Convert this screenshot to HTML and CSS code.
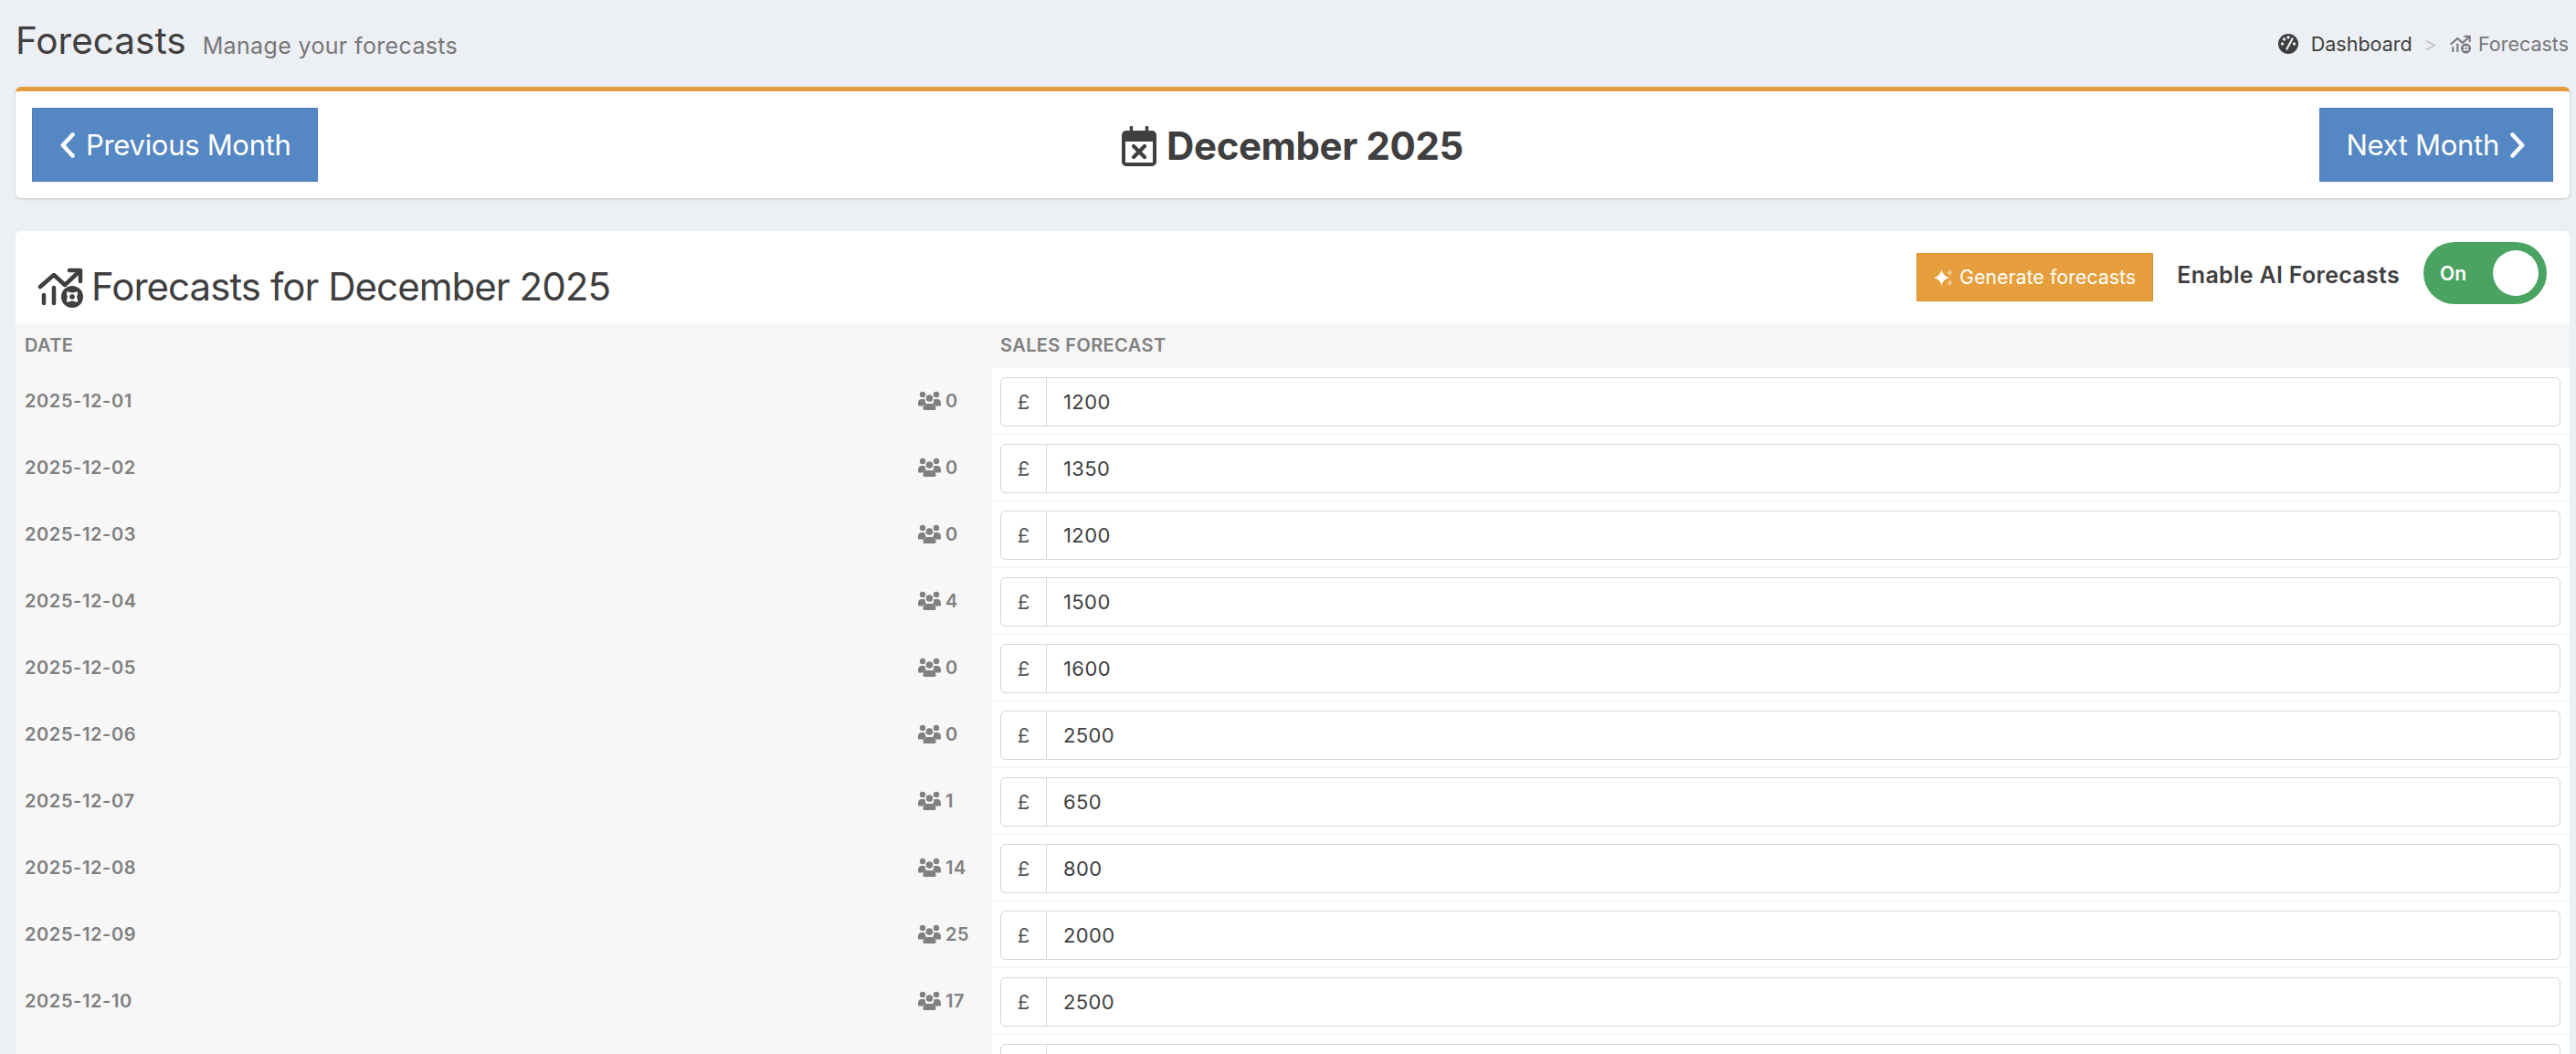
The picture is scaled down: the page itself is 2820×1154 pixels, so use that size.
FILE: index.html
```html
<!DOCTYPE html>
<html lang="en">
<head>
<meta charset="utf-8">
<title>Forecasts</title>
<link rel="stylesheet" href="styles.css">
</head>
<body>
<svg class="defs" aria-hidden="true">
  <symbol id="chart" viewBox="20 18 52 46">
    <path d="M23 41 38 28 50 39 66 24" fill="none" stroke="currentColor" stroke-width="4.5" stroke-linecap="round" stroke-linejoin="round"/>
    <path d="M55 23H67V35" fill="none" stroke="currentColor" stroke-width="4.5" stroke-linecap="round" stroke-linejoin="round"/>
    <path d="M27 50V59M38 42V59" fill="none" stroke="currentColor" stroke-width="4.5" stroke-linecap="round"/>
    <circle cx="58" cy="52" r="12" fill="currentColor"/>
    <path d="M52 46.500h2.500q3.500 2 7 0H64v2.500q-1.800 3 0 6V57.500h-2.500q-3.500-2-7 0H52V55q1.800-3 0-6z" fill="#fff"/>
    <circle cx="58" cy="52" r="2.800" fill="currentColor"/>
  </symbol>
  <symbol id="users" viewBox="0 0 25 21">
    <circle cx="5" cy="4" r="3.200"/>
    <circle cx="20" cy="4" r="3.200"/>
    <circle cx="12.500" cy="8" r="3.800"/>
    <path d="M0 13.500q0-4.500 4-4.500h2.500q.8 0 1.500.4-.9 3 1.200 4.600-2.800 1-3.700 2.500H1q-1 0-1-1zM25 13.500q0-4.500-4-4.500h-2.500q-.8 0-1.500.4.900 3-1.200 4.600 2.800 1 3.700 2.500H24q1 0 1-1z"/>
    <path d="M5.500 19q0-5 5-5h4q5 0 5 5v.5q0 1.500-1.500 1.500H7q-1.500 0-1.500-1.500z"/>
  </symbol>
</svg>

<header class="page-head">
  <div class="page-title">
    <h1>Forecasts</h1>
    <span class="page-sub">Manage your forecasts</span>
  </div>
  <nav class="crumbs">
    <svg class="crumb-gauge" viewBox="0 0 22 22"><circle cx="11" cy="11" r="11" fill="#3f3f3f"/><circle cx="4.500" cy="11" r="1.700" fill="#eceff4"/><circle cx="6.500" cy="6" r="1.700" fill="#eceff4"/><circle cx="11" cy="4" r="1.700" fill="#eceff4"/><circle cx="17.500" cy="11" r="1.700" fill="#eceff4"/><path d="M9.500 16.500 15.500 5.500" stroke="#eceff4" stroke-width="2.200" stroke-linecap="round"/></svg>
    <a class="crumb-link">Dashboard</a>
    <span class="crumb-sep">&gt;</span>
    <svg class="crumb-chart"><use href="#chart"/></svg>
    <span class="crumb-current">Forecasts</span>
  </nav>
</header>

<section class="month-card">
  <a class="btn-month btn-prev">
    <svg class="chev" viewBox="0 0 16 28"><path d="M13.500 2.500 2.800 14 13.500 25.500"/></svg>
    Previous Month
  </a>
  <h2 class="month-title">
    <svg class="cal" viewBox="0 0 38 44"><path d="M10.500 1.500V8M27.500 1.500V8" stroke="#3f3f3f" stroke-width="3.400" stroke-linecap="round"/><rect y="5" width="38" height="39" rx="5" fill="#3f3f3f"/><rect x="4" y="17" width="30" height="23" fill="#fff"/><path d="M13 22 25 34M25 22 13 34" stroke="#3f3f3f" stroke-width="4.200" stroke-linecap="round"/></svg>
    December 2025
  </h2>
  <a class="btn-month btn-next">
    Next Month
    <svg class="chev" viewBox="0 0 16 28"><path d="M2.500 2.500 13.200 14 2.500 25.500"/></svg>
  </a>
</section>

<section class="table-card">
  <div class="table-head">
    <h2 class="table-title"><svg class="title-chart"><use href="#chart"/></svg>Forecasts for December 2025</h2>
    <div class="table-actions">
      <a class="btn-generate">
        <svg class="spark" viewBox="0 0 22 20"><path d="M8.500 1Q9.500 8 17 10 9.500 12 8.500 19 7.500 12 0 10 7.500 8 8.500 1z" fill="#fff"/><path d="M17.500 0Q18 3.500 21 4.500 18 5.500 17.500 9 17 5.500 14 4.500 17 3.500 17.500 0zM17.500 11Q18 14.500 21 15.500 18 16.500 17.500 20 17 16.500 14 15.500 17 14.500 17.500 11z" fill="#fff" fill-opacity=".45"/></svg>
        Generate forecasts
      </a>
      <span class="ai-label">Enable AI Forecasts</span>
      <div class="toggle"><span class="toggle-text">On</span><span class="knob"></span></div>
    </div>
  </div>
  <table class="grid">
    <thead>
      <tr><th class="col-date">DATE</th><th class="col-sales">SALES FORECAST</th></tr>
    </thead>
    <tbody>
      <tr><td class="col-date"><div class="date-row"><span>2025-12-01</span><span class="covers"><svg class="ico-users"><use href="#users"/></svg>0</span></div></td><td class="col-sales"><div class="money"><span class="addon">£</span><input class="money-input" value="1200"></div></td></tr>
      <tr><td class="col-date"><div class="date-row"><span>2025-12-02</span><span class="covers"><svg class="ico-users"><use href="#users"/></svg>0</span></div></td><td class="col-sales"><div class="money"><span class="addon">£</span><input class="money-input" value="1350"></div></td></tr>
      <tr><td class="col-date"><div class="date-row"><span>2025-12-03</span><span class="covers"><svg class="ico-users"><use href="#users"/></svg>0</span></div></td><td class="col-sales"><div class="money"><span class="addon">£</span><input class="money-input" value="1200"></div></td></tr>
      <tr><td class="col-date"><div class="date-row"><span>2025-12-04</span><span class="covers"><svg class="ico-users"><use href="#users"/></svg>4</span></div></td><td class="col-sales"><div class="money"><span class="addon">£</span><input class="money-input" value="1500"></div></td></tr>
      <tr><td class="col-date"><div class="date-row"><span>2025-12-05</span><span class="covers"><svg class="ico-users"><use href="#users"/></svg>0</span></div></td><td class="col-sales"><div class="money"><span class="addon">£</span><input class="money-input" value="1600"></div></td></tr>
      <tr><td class="col-date"><div class="date-row"><span>2025-12-06</span><span class="covers"><svg class="ico-users"><use href="#users"/></svg>0</span></div></td><td class="col-sales"><div class="money"><span class="addon">£</span><input class="money-input" value="2500"></div></td></tr>
      <tr><td class="col-date"><div class="date-row"><span>2025-12-07</span><span class="covers"><svg class="ico-users"><use href="#users"/></svg>1</span></div></td><td class="col-sales"><div class="money"><span class="addon">£</span><input class="money-input" value="650"></div></td></tr>
      <tr><td class="col-date"><div class="date-row"><span>2025-12-08</span><span class="covers"><svg class="ico-users"><use href="#users"/></svg>14</span></div></td><td class="col-sales"><div class="money"><span class="addon">£</span><input class="money-input" value="800"></div></td></tr>
      <tr><td class="col-date"><div class="date-row"><span>2025-12-09</span><span class="covers"><svg class="ico-users"><use href="#users"/></svg>25</span></div></td><td class="col-sales"><div class="money"><span class="addon">£</span><input class="money-input" value="2000"></div></td></tr>
      <tr><td class="col-date"><div class="date-row"><span>2025-12-10</span><span class="covers"><svg class="ico-users"><use href="#users"/></svg>17</span></div></td><td class="col-sales"><div class="money"><span class="addon">£</span><input class="money-input" value="2500"></div></td></tr>
      <tr><td class="col-date"></td><td class="col-sales"><div class="money"><span class="addon"></span><input class="money-input" value=""></div></td></tr>
    </tbody>
  </table>
</section>
</body>
</html>
```
FILE: styles.css
```css
* { box-sizing: border-box; }
html, body { height: 1154px; overflow: hidden; }
body {
  margin: 0;
  padding: 0 7px 0 17px;
  background: #eceff4;
  color: #3f3f3f;
  font-family: Inter, "Liberation Sans", sans-serif;
}
.defs { display: none; }
h1, h2 { margin: 0; font-weight: 400; }

.page-head {
  height: 95px;
  display: flex;
  justify-content: space-between;
  align-items: center;
  margin-right: -7px;
  padding-right: 8px;
}
.page-title { display: flex; align-items: baseline; gap: 18px; margin-top: -6px; }
.page-title h1 { font-size: 40.500px; line-height: 48px; }
.page-sub { font-size: 25px; letter-spacing: .35px; color: #777; }

.crumbs { display: flex; align-items: center; font-size: 21.500px; }
.crumb-gauge { width: 22px; height: 22px; margin-right: 14px; }
.crumb-link { color: #3f3f3f; }
.crumb-sep { color: #c4c4c4; margin: 0 14px 0 13px; }
.crumb-chart { width: 24px; height: 22px; margin-right: 7px; color: #777; }
.crumb-current { color: #777; }

.month-card {
  display: grid;
  grid-template-columns: 1fr auto 1fr;
  align-items: center;
  padding: 18px;
  background: #fff;
  border-top: 5px solid #e59e3d;
  border-radius: 6px;
  box-shadow: 0 1px 3px rgba(0, 0, 0, .18);
}
.btn-month {
  display: inline-flex;
  align-items: center;
  height: 81px;
  gap: 12px;
  font-size: 31px;
  letter-spacing: -.3px;
  color: #fff;
  background: #5487c3;
  border: 1px solid #4b7fbc;
}
.btn-prev { justify-self: start; padding: 0 28px 0 30px; }
.btn-next { justify-self: end; padding: 0 30px 0 28px; }
.chev { width: 16px; height: 28px; fill: none; stroke: #fff; stroke-width: 4.500; stroke-linecap: round; stroke-linejoin: round; }
.month-title { display: flex; align-items: center; gap: 11px; font-size: 42px; font-weight: 700; letter-spacing: -.4px; padding-top: 2px; }
.cal { width: 38px; height: 44px; }

.table-card {
  margin-top: 36px;
  background: #fff;
  border-radius: 6px 6px 0 0;
}
.table-head {
  height: 101px;
  display: flex;
  justify-content: space-between;
  align-items: flex-start;
  padding: 12px 25px 0 24px;
}
.table-title { display: flex; align-items: center; gap: 7px; margin-top: 23px; font-size: 42px; letter-spacing: -.95px; line-height: 52px; }
.title-chart { width: 52px; height: 46px; color: #3f3f3f; }
.table-actions { display: flex; align-items: center; gap: 26px; }
.btn-generate {
  display: inline-flex;
  align-items: center;
  gap: 6px;
  height: 53px;
  margin-top: 9px;
  padding: 0 18px;
  font-size: 21px;
  letter-spacing: .2px;
  color: #fff;
  background: #e69f3c;
  border: 1px solid #d9922f;
}
.spark { width: 22px; height: 20px; }
.ai-label { font-size: 25px; font-weight: 600; letter-spacing: .3px; margin-top: 3px; }
.toggle {
  width: 135px;
  height: 68px;
  display: flex;
  align-items: center;
  justify-content: space-between;
  padding: 0 9px 0 18px;
  background: #4ba362;
  border-radius: 34px;
}
.toggle-text { color: #fff; font-size: 21px; font-weight: 600; }
.knob { width: 50px; height: 50px; background: #fff; border-radius: 50%; }

.grid { width: 100%; border-collapse: collapse; table-layout: fixed; }
.grid th {
  height: 49px;
  padding: 0 0 2px;
  text-align: left;
  font-size: 20px;
  font-weight: 600;
  color: #808080;
  background: #f6f6f6;
  letter-spacing: .4px;
}
.grid td { padding: 0; border-bottom: 1px solid #f4f4f4; }
.col-date { width: 1069px; padding-left: 10px !important; }
.grid td.col-date { background: #f7f7f7; }
.grid .col-sales { padding: 0 10px 2px 9px; }
.grid td.col-sales { padding: 10px 10px 8px 9px; }
.date-row {
  display: flex;
  justify-content: space-between;
  align-items: center;
  font-size: 20px;
  font-weight: 600;
  letter-spacing: .6px;
  color: #808080;
}
.covers { width: 81px; display: flex; align-items: center; gap: 5px; }
.ico-users { width: 25px; height: 21px; margin-top: -2px; fill: #808080; }
.money { display: flex; height: 54px; }
.addon {
  width: 51px;
  display: flex;
  align-items: center;
  justify-content: center;
  font-size: 22px;
  color: #555;
  border: 1.500px solid #d6d6de;
  border-radius: 6px 0 0 6px;
}
.money-input {
  flex: 1;
  min-width: 0;
  padding: 0 18px;
  font: 400 22px Inter, "Liberation Sans", sans-serif;
  color: #3f3f3f;
  letter-spacing: .4px;
  border: 1.500px solid #d6d6de;
  border-left: 0;
  border-radius: 0 6px 6px 0;
  background: #fff;
  outline: none;
}
```
